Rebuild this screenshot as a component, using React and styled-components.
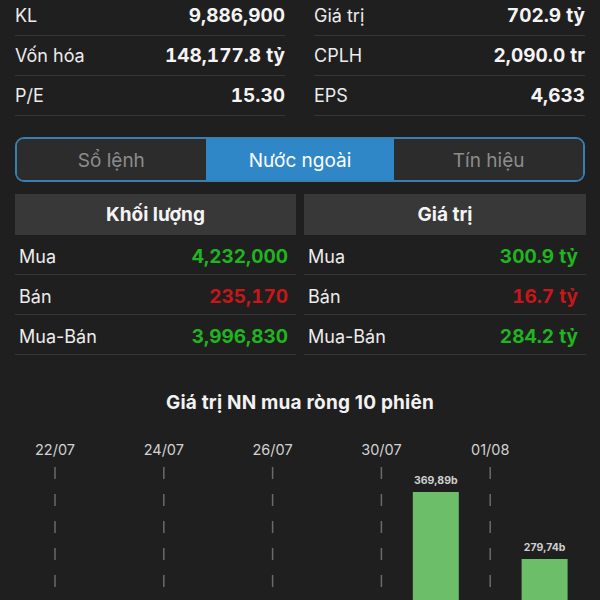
import React from "react";
import styled, { createGlobalStyle } from "styled-components";

const Global = createGlobalStyle`
  html, body { margin: 0; padding: 0; background: #1f1f1f; overflow: hidden; }
  body { font-family: Inter, "Noto Sans", sans-serif; color: #f2f2f2; }
`;

const Page = styled.div`
  width: 600px;
  height: 600px;
  overflow: hidden;
  background: #1f1f1f;
  padding: 0 15px;
  box-sizing: border-box;
  display: flex;
  flex-direction: column;
`;

const Stats = styled.div`
  margin-top: -4px;
  display: grid;
  grid-template-columns: 270px 271px;
  column-gap: 29px;
`;

const StatCol = styled.div`
  display: flex;
  flex-direction: column;
`;

const StatRow = styled.div`
  height: 39px;
  border-bottom: 1px solid #363636;
  display: flex;
  align-items: center;
  justify-content: space-between;
  font-size: 18px;
`;

const Label = styled.span`
  font-weight: 400;
  font-size: 18px;
  color: #ececec;
`;

const Value = styled.span`
  font-weight: 700;
  font-size: 19px;
  font-variant-numeric: tabular-nums;
  color: ${(p) => p.$color || "#f4f4f4"};
`;

const Segmented = styled.div`
  margin-top: 21px;
  height: 46px;
  box-sizing: border-box;
  border: 2px solid #3b7fae;
  border-radius: 9px;
  overflow: hidden;
  display: grid;
  grid-template-columns: 1fr 1fr 1fr;
`;

const Segment = styled.div`
  display: flex;
  align-items: center;
  justify-content: center;
  padding-top: 1px;
  font-size: 19px;
  background: ${(p) => (p.$active ? "#2f87c7" : "#2c2c2c")};
  color: ${(p) => (p.$active ? "#ffffff" : "#8c8c8c")};
`;

const Tables = styled.div`
  margin-top: 12px;
  display: grid;
  grid-template-columns: 281px 282px;
  column-gap: 8px;
`;

const Table = styled.div`
  display: flex;
  flex-direction: column;
`;

const HeadCell = styled.div`
  height: 41px;
  background: #383838;
  display: flex;
  align-items: center;
  justify-content: center;
  font-size: 19px;
  font-weight: 700;
  color: #f4f4f4;
`;

const DataRow = styled.div`
  height: 40px;
  box-sizing: border-box;
  border-bottom: 1px solid #363636;
  display: flex;
  align-items: center;
  justify-content: space-between;
  padding: 4px ${(p) => p.$padR}px 0 ${(p) => p.$padL}px;
`;

const Title = styled.div`
  margin-top: 36px;
  text-align: center;
  font-size: 19px;
  letter-spacing: 0.2px;
  font-weight: 700;
  color: #f2f2f2;
`;

const ChartWrap = styled.div`
  margin-top: 16px;
  height: 170px;
`;

const GREEN = "#20b520";
const RED = "#c8161a";

const statsLeft = [
  ["KL", "9,886,900"],
  ["Vốn hóa", "148,177.8 tỷ"],
  ["P/E", "15.30"],
];
const statsRight = [
  ["Giá trị", "702.9 tỷ"],
  ["CPLH", "2,090.0 tr"],
  ["EPS", "4,633"],
];

const volRows = [
  ["Mua", "4,232,000", GREEN],
  ["Bán", "235,170", RED],
  ["Mua-Bán", "3,996,830", GREEN],
];
const valRows = [
  ["Mua", "300.9 tỷ", GREEN],
  ["Bán", "16.7 tỷ", RED],
  ["Mua-Bán", "284.2 tỷ", GREEN],
];

const slots = ["22/07", "23/07", "24/07", "25/07", "26/07", "29/07", "30/07", "31/07", "01/08", "02/08"];
const bars = { 7: { top: 62, label: "369,89b" }, 9: { top: 129, label: "279,74b" } };

function Chart() {
  const cx = (i) => 40 + 54.4 * i;
  return (
    <svg width="570" height="170" viewBox="0 0 570 170">
      {slots.map((d, i) =>
        i % 2 === 0 ? (
          <g key={d}>
            <text x={cx(i)} y={25} fill="#d2d2d2" fontSize="14.5" textAnchor="middle" fontFamily="Inter, sans-serif">
              {d}
            </text>
            <line x1={cx(i)} x2={cx(i)} y1={37} y2={170} stroke="#6a6a6a" strokeWidth="1.5" strokeDasharray="12 15" />
          </g>
        ) : null
      )}
      {Object.entries(bars).map(([i, b]) => (
        <g key={i}>
          <text x={cx(+i)} y={b.top - 8} fill="#cfcfcf" fontSize="10.5" fontWeight="700" textAnchor="middle" fontFamily="Inter, sans-serif">
            {b.label}
          </text>
          <rect x={cx(+i) - 23} y={b.top} width="46" height={170 - b.top} fill="#6cbf68" />
        </g>
      ))}
    </svg>
  );
}

export default function App() {
  return (
    <>
      <Global />
      <Page>
        <Stats>
          <StatCol>
            {statsLeft.map(([l, v]) => (
              <StatRow key={l}>
                <Label>{l}</Label>
                <Value>{v}</Value>
              </StatRow>
            ))}
          </StatCol>
          <StatCol>
            {statsRight.map(([l, v]) => (
              <StatRow key={l}>
                <Label>{l}</Label>
                <Value>{v}</Value>
              </StatRow>
            ))}
          </StatCol>
        </Stats>
        <Segmented>
          <Segment>Sổ lệnh</Segment>
          <Segment $active>Nước ngoài</Segment>
          <Segment>Tín hiệu</Segment>
        </Segmented>
        <Tables>
          <Table>
            <HeadCell>Khối lượng</HeadCell>
            {volRows.map(([l, v, c]) => (
              <DataRow key={l} $padL={4} $padR={8}>
                <Label>{l}</Label>
                <Value $color={c}>{v}</Value>
              </DataRow>
            ))}
          </Table>
          <Table>
            <HeadCell>Giá trị</HeadCell>
            {valRows.map(([l, v, c]) => (
              <DataRow key={l} $padL={4} $padR={8}>
                <Label>{l}</Label>
                <Value $color={c}>{v}</Value>
              </DataRow>
            ))}
          </Table>
        </Tables>
        <Title>Giá trị NN mua ròng 10 phiên</Title>
        <ChartWrap>
          <Chart />
        </ChartWrap>
      </Page>
    </>
  );
}
